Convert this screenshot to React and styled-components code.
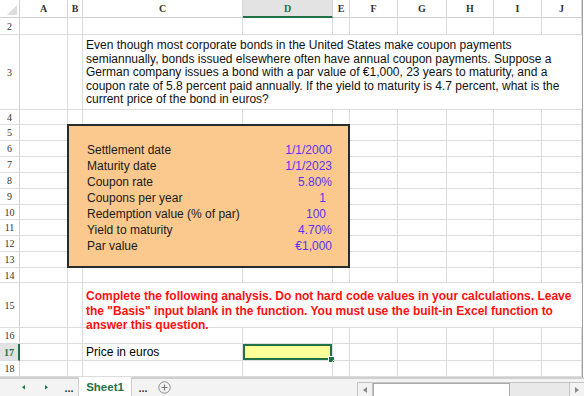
import React from "react";
import styled, { createGlobalStyle } from "styled-components";

const GREEN = "#217346";

const GlobalStyle = createGlobalStyle`
  html, body {
    margin: 0;
    padding: 0;
    background: #fff;
    overflow: hidden;
  }
  body {
    font-family: "Liberation Sans", Arial, sans-serif;
    font-size: 12px;
    color: #000;
  }
`;

const COLS = ["A", "B", "C", "D", "E", "F", "G", "H", "I", "J"];
const COL_WIDTHS = [20, 48, 15, 160, 90, 17, 48, 49, 47, 48, 40];
const ROWS = [2, 3, 4, 5, 6, 7, 8, 9, 10, 11, 12, 13, 14, 15, 16, 17, 18];
const ROW_HEIGHTS = {
  2: 17, 3: 75, 4: 15, 5: 16, 6: 16, 7: 16, 8: 16, 9: 16, 10: 15,
  11: 16, 12: 16, 13: 16, 14: 15, 15: 45, 16: 16, 17: 17, 18: 16,
};

const inputs = [
  { label: "Settlement date", value: "1/1/2000" },
  { label: "Maturity date", value: "1/1/2023" },
  { label: "Coupon rate", value: "5.80%" },
  { label: "Coupons per year", value: "1", inset: true },
  { label: "Redemption value (% of par)", value: "100", inset: true },
  { label: "Yield to maturity", value: "4.70%" },
  { label: "Par value", value: "€1,000" },
];

const Page = styled.div`
  width: 584px;
  height: 396px;
  display: flex;
  flex-direction: column;
`;

const Sheet = styled.div`
  display: grid;
  grid-template-columns: ${COL_WIDTHS.map((w) => w + "px").join(" ")};
  grid-template-rows: 18px ${ROWS.map((r) => ROW_HEIGHTS[r] + "px").join(" ")};
  width: 582px;
  border-right: 1px solid #9e9e9e;
  flex: none;
`;

const Corner = styled.div`
  grid-column: 1;
  grid-row: 1;
  border-right: 1px solid #d0d0d0;
  border-bottom: 1px solid #d0d0d0;
  display: flex;
  align-items: flex-end;
  justify-content: flex-end;
  padding: 0 2px 2px 0;
`;

const ColHeader = styled.div`
  grid-row: 1;
  grid-column: ${(p) => p.$col};
  font-family: "Liberation Serif", "Times New Roman", serif;
  font-size: 10px;
  font-weight: bold;
  color: ${(p) => (p.$active ? GREEN : "#333")};
  background: ${(p) => (p.$active ? "#e3e3e3" : "#fff")};
  border-right: 1px solid #d6d6d6;
  border-bottom: ${(p) => (p.$active ? `2px solid ${GREEN}` : "1px solid #d0d0d0")};
  display: flex;
  align-items: center;
  justify-content: center;
`;

const RowHeader = styled.div`
  grid-column: 1;
  grid-row: ${(p) => p.$row};
  font-family: "Liberation Serif", "Times New Roman", serif;
  font-size: 10px;
  font-weight: ${(p) => (p.$active ? "bold" : "normal")};
  color: ${(p) => (p.$active ? GREEN : "#333")};
  background: ${(p) => (p.$active ? "#e3e3e3" : "#fff")};
  border-right: ${(p) => (p.$active ? `2px solid ${GREEN}` : "1px solid #d0d0d0")};
  border-bottom: 1px solid #dedede;
  display: flex;
  align-items: center;
  justify-content: center;
`;

const Cell = styled.div`
  position: relative;
  grid-column: ${(p) => p.$col};
  grid-row: ${(p) => p.$row};
  border-right: 1px solid #dcdcdc;
  border-bottom: 1px solid #dcdcdc;
  padding: 0 3px;
  display: flex;
  align-items: center;
  white-space: nowrap;
  background: ${(p) => (p.$selected ? "#ffff99" : "transparent")};
  box-shadow: ${(p) => (p.$selected ? `inset 0 0 0 2px ${GREEN}` : "none")};
`;

const FillHandle = styled.span`
  position: absolute;
  right: -3px;
  bottom: -3px;
  width: 5px;
  height: 5px;
  background: ${GREEN};
  border: 1px solid #fff;
`;

const MergedText = styled.div`
  grid-column: 4 / 12;
  grid-row: ${(p) => p.$row};
  border-bottom: 1px solid #dcdcdc;
  padding: ${(p) => p.$pad};
  line-height: ${(p) => p.$lh};
  font-weight: ${(p) => (p.$alert ? "bold" : "normal")};
  color: ${(p) => (p.$alert ? "#ff1010" : "#111")};
  white-space: nowrap;
`;

const InputBox = styled.div`
  grid-column: 3 / 7;
  grid-row: 5 / 14;
  margin: -1px 0 0 -1px;
  background: #fbc98e;
  border: 2px solid #2a2a2a;
  z-index: 1;
  display: grid;
  grid-template-columns: 15px 160px 1fr;
  grid-auto-rows: 16px;
  padding-top: 16px;
  align-content: start;
`;

const Label = styled.div`
  grid-column: 2;
  padding-left: 3px;
  line-height: 16px;
  color: #1a1a1a;
`;

const Value = styled.div`
  grid-column: 3;
  text-align: right;
  padding-right: ${(p) => (p.$inset ? "22px" : "16px")};
  line-height: 16px;
  color: #5b32ee;
`;

const TabBar = styled.div`
  flex: 1;
  display: flex;
  align-items: stretch;
  background: #f3f3f3;
  border-top: 2px solid #cfcfcf;
  padding-left: 17px;
`;

const NavButton = styled.div`
  width: ${(p) => p.$w}px;
  display: flex;
  align-items: center;
  justify-content: center;
  color: #333;
  font-size: 11px;
  font-weight: bold;
`;

const SheetTab = styled.div`
  width: 52px;
  margin-left: 3px;
  background: #fff;
  border-left: 1px solid #cfcfcf;
  border-right: 1px solid #cfcfcf;
  margin-top: -2px;
  display: flex;
  align-items: center;
  justify-content: center;
  color: ${GREEN};
  font-weight: bold;
  font-size: 11.5px;
`;

const Scroll = styled.div`
  margin-left: auto;
  align-self: flex-end;
  width: 226px;
  height: 13px;
  display: flex;
  background: #e9e9e9;
  border-top: 1px solid #c4c4c4;
  border-left: 1px solid #c4c4c4;
`;

const ScrollArrow = styled.div`
  width: 14px;
  display: flex;
  align-items: center;
  justify-content: center;
  background: #f2f2f2;
  border-right: ${(p) => (p.$left ? "1px solid #c4c4c4" : "none")};
  border-left: ${(p) => (p.$left ? "none" : "1px solid #c4c4c4")};
  margin-left: ${(p) => (p.$left ? "0" : "auto")};
`;

const Thumb = styled.div`
  width: 135px;
  background: #fff;
  border: 1px solid #a9a9a9;
  border-bottom: none;
`;

const Tri = ({ dir, color = "#8a8a8a", size = 4 }) => (
  <svg width={size} height={size * 1.5} viewBox="0 0 4 6">
    {dir === "left" ? (
      <polygon points="4,0 4,6 0,3" fill={color} />
    ) : (
      <polygon points="0,0 0,6 4,3" fill={color} />
    )}
  </svg>
);

const PlusCircle = () => (
  <svg width="13" height="13" viewBox="0 0 13 13">
    <circle cx="6.5" cy="6.5" r="5.7" fill="none" stroke="#8c8c8c" strokeWidth="1" />
    <path d="M6.5 3.5v6M3.5 6.5h6" stroke="#7a7a7a" strokeWidth="1.2" />
  </svg>
);

const App = () => {
  const cells = [];
  ROWS.forEach((r) => {
    cells.push(
      <RowHeader key={"h" + r} $row={r} $active={r === 17}>
        {r}
      </RowHeader>
    );
    COLS.forEach((c, i) => {
      const gridCol = i + 2;
      if ((r === 3 || r === 15) && gridCol >= 4) return;
      const selected = r === 17 && c === "D";
      cells.push(
        <Cell key={c + r} $col={gridCol} $row={r} $selected={selected}>
          {r === 17 && c === "C" ? "Price in euros" : null}
          {selected && <FillHandle />}
        </Cell>
      );
    });
  });

  return (
    <Page>
      <GlobalStyle />
      <Sheet>
        <Corner>
          <svg width="10" height="10" viewBox="0 0 10 10">
            <polygon points="10,0 10,10 0,10" fill="#dcdcdc" />
          </svg>
        </Corner>
        {COLS.map((c, i) => (
          <ColHeader key={c} $col={i + 2} $active={c === "D"}>
            {c}
          </ColHeader>
        ))}
        {cells}
        <MergedText $row={3} $pad="4px 3px 0" $lh="13.5px">
          Even though most corporate bonds in the United States make coupon payments
          <br />
          semiannually, bonds issued elsewhere often have annual coupon payments. Suppose a
          <br />
          German company issues a bond with a par value of €1,000, 23 years to maturity, and a
          <br />
          coupon rate of 5.8 percent paid annually. If the yield to maturity is 4.7 percent, what is the
          <br />
          current price of the bond in euros?
        </MergedText>
        <MergedText $row={15} $alert $pad="6px 3px 0" $lh="14.5px">
          Complete the following analysis. Do not hard code values in your calculations. Leave
          <br />
          the "Basis" input blank in the function. You must use the built-in Excel function to
          <br />
          answer this question.
        </MergedText>
        <InputBox>
          {inputs.map((item) => (
            <React.Fragment key={item.label}>
              <Label>{item.label}</Label>
              <Value $inset={item.inset}>{item.value}</Value>
            </React.Fragment>
          ))}
        </InputBox>
      </Sheet>
      <TabBar>
        <NavButton $w={12}>
          <Tri dir="left" color={GREEN} size={3} />
        </NavButton>
        <NavButton $w={34}>
          <Tri dir="right" color={GREEN} size={3} />
        </NavButton>
        <NavButton $w={12}>...</NavButton>
        <SheetTab>Sheet1</SheetTab>
        <NavButton $w={22}>...</NavButton>
        <NavButton $w={20}>
          <PlusCircle />
        </NavButton>
        <Scroll>
          <ScrollArrow $left>
            <Tri dir="left" />
          </ScrollArrow>
          <Thumb />
          <ScrollArrow>
            <Tri dir="right" />
          </ScrollArrow>
        </Scroll>
      </TabBar>
    </Page>
  );
};

export default App;
